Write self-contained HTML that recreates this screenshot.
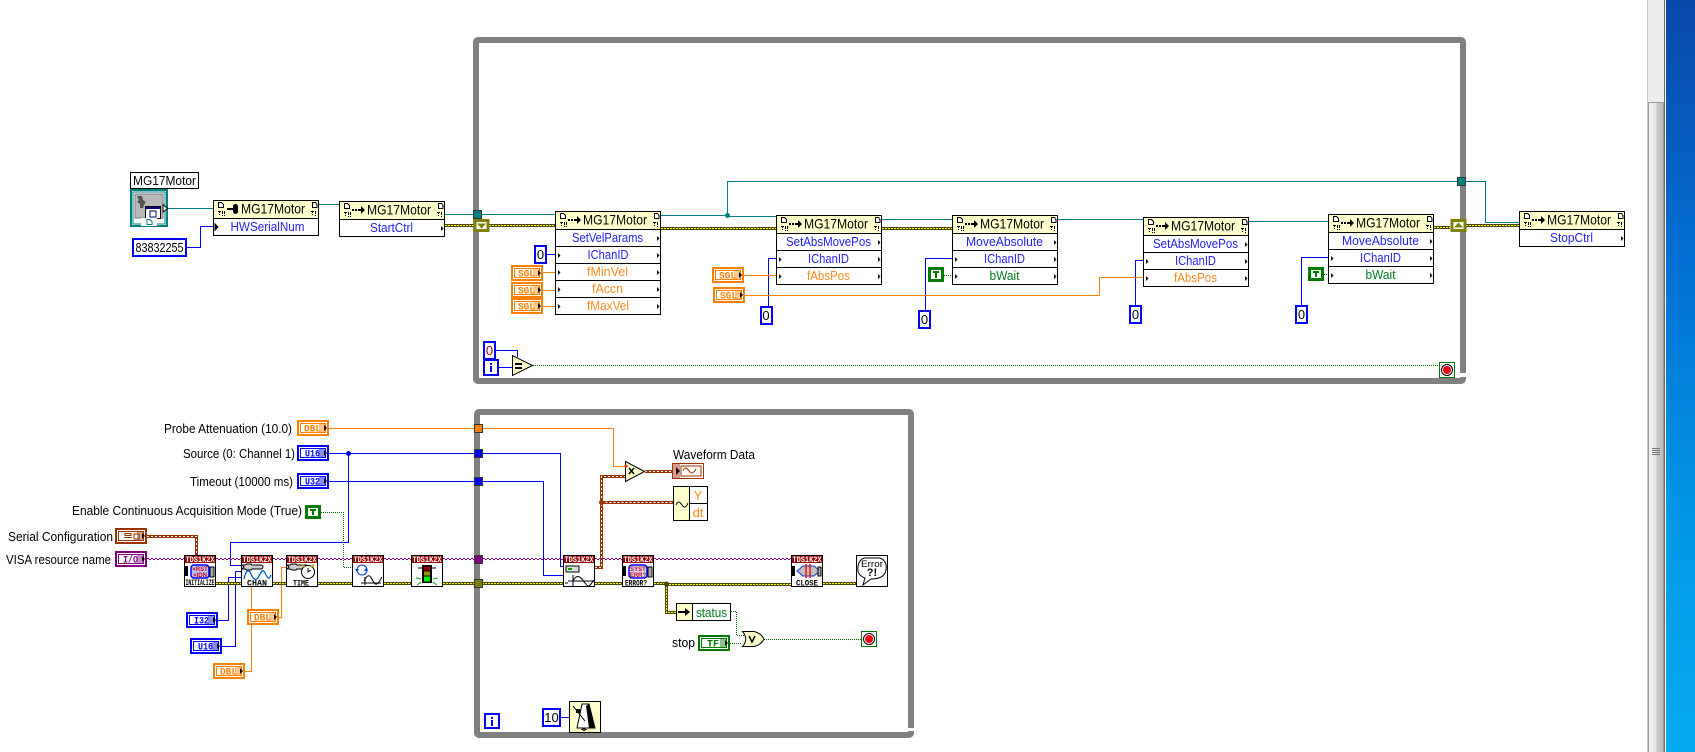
<!DOCTYPE html>
<html><head><meta charset="utf-8"><title>Block Diagram</title>
<style>
html,body{margin:0;padding:0;background:#fff;width:1695px;height:752px;overflow:hidden}
svg{position:absolute;left:0;top:0;font-family:"Liberation Sans",sans-serif}
.w{fill:none;shape-rendering:crispEdges}
.t{stroke:#008080}.bl{stroke:#0000ff}.or{stroke:#ff8000}
.gd{stroke:#006400;stroke-dasharray:1 1}
.f{fill:none;stroke:#808080;stroke-width:6}
.l{font-size:13px;fill:#000}
.m{font-size:14px;fill:#000}
.r{font-size:13px;text-anchor:middle}
.b{fill:#2222ff}.o{fill:#ff8a1e}.g{fill:#007a20}
.k{font:bold 10px "Liberation Mono",monospace}
.n{font-size:13px;fill:#000;text-anchor:middle}
.td{font:bold 8px "Liberation Mono",monospace;fill:#fff}
.ts{font:bold 8px "Liberation Mono",monospace;fill:#000}
</style></head><body>
<svg width="1695" height="752" viewBox="0 0 1695 752" xmlns="http://www.w3.org/2000/svg">
<defs>
<linearGradient id="bg" x1="0" y1="0" x2="0" y2="1"><stop offset="0" stop-color="#0a48a8"/><stop offset=".35" stop-color="#0270d4"/><stop offset=".7" stop-color="#0298e6"/><stop offset="1" stop-color="#06aaf0"/></linearGradient>
<linearGradient id="th" x1="0" y1="0" x2="1" y2="0"><stop offset="0" stop-color="#f4f4f4"/><stop offset=".45" stop-color="#e6e6e6"/><stop offset=".6" stop-color="#c8c8cc"/><stop offset="1" stop-color="#bcbcc0"/></linearGradient>
<g id="hd">
<rect x=".5" y=".5" width="104" height="18" fill="#ffffcc"/>
<path d="M5.500 2.500H8.500L10.500 4.500V7.500H5.500Z" fill="#fff" stroke="#000" stroke-width="1" shape-rendering="crispEdges"/>
<path d="M99.500 2.500H102.500L104 4.500V7.500H99.500Z" fill="#fff" stroke="#000" stroke-width="1" shape-rendering="crispEdges"/>
<path d="M5 11h3v1h-1v1h-1v-1h-1zM6 14h1v1h-1zM9 11h1v3h-1zM9 15h1v1h-1zM11 11h1v3h-1zM11 15h1v1h-1z" fill="#000"/>
<path d="M98 11h3v1h-1v1h-1v-1h-1zM99 14h1v1h-1zM102 11h1v3h-1zM102 15h1v1h-1z" fill="#000"/>
</g>
<g id="ar"><path d="M13 8h2v2h-2zM16 8h2v2h-2zM19 8h3V5l4 4-4 4v-3h-3z" fill="#000"/></g>
<g id="ky"><path d="M14 8h6V6.500a2.500 2.500 0 0 1 5 0V11.500a2.500 2.500 0 0 1-5 0V10H14z" fill="#000"/></g>
<g id="tl"><path d="M3 -2V3L5.500 .5Z" fill="#000"/></g>
<g id="tr"><path d="M102 -2V3L104.500 .5Z" fill="#000"/></g>
<g id="c">
<rect x="1" y="1" width="30" height="14" fill="#fff" stroke="currentColor" stroke-width="2"/>
<rect x="3.500" y="3.500" width="25" height="9" fill="#fff" stroke="currentColor" stroke-width="1"/>
<rect x="22" y="3" width="7" height="10" fill="currentColor" opacity=".45"/>
<path d="M27 5V11L30 8Z" fill="#000"/>
</g>
<g id="tds">
<rect x=".5" y=".5" width="31" height="31" fill="#fff" stroke="#000"/>
<rect x="1" y="1" width="30" height="7" fill="#990000"/>
<text x="16" y="7" class="td" text-anchor="middle" textLength="29" lengthAdjust="spacingAndGlyphs">TDS1K2X</text>
</g>
<g id="wr"><path d="M1 10h3l2-1h4l1 1h9a1.500 1.500 0 0 1 0 4h-9l-1 1h-4l-2-1h-3l2-2z" fill="#ccc" stroke="#000" stroke-width="1"/></g>
<g id="stp"><rect x=".5" y=".5" width="15" height="15" fill="#fff" stroke="#007a00"/><circle cx="8" cy="8" r="5.500" fill="#fff" stroke="#000"/><circle cx="8" cy="8" r="4" fill="#f00010"/></g>
</defs>

<rect x="1647" y="0" width="1" height="752" fill="#c8c8c8"/>
<rect x="1648" y="0" width="16" height="102" fill="#ededed"/>
<rect x="1648.500" y="102.500" width="15" height="660" fill="url(#th)" stroke="#999"/>
<path d="M1652 448.500h8M1652 450.500h8M1652 452.500h8M1652 454.500h8" stroke="#777" shape-rendering="crispEdges"/>
<rect x="1664" y="0" width="1" height="752" fill="#6a6a6a"/>
<rect x="1666" y="0" width="29" height="752" fill="url(#bg)"/>

<!-- loop frames -->
<rect x="476" y="40" width="987" height="341" rx="2" class="f"/>
<rect x="1459" y="373" width="8" height="4" fill="#fff"/>
<rect x="477" y="412" width="434" height="323" rx="2" class="f"/>
<rect x="907" y="728" width="8" height="3" fill="#fff"/>

<!-- wires -->
<path class="w t" d="M168 208.500H213.500M319 204.500H339.500M445 214.500H555.500M661 215.500H727.500V181.500H1458M727 216.500H776.500M882 219.500H952.500M1058 219.500H1143.500M1249 221.500H1328.500M1466 181.500H1485.500V222.500H1519.500"/>
<circle cx="727.500" cy="215.500" r="2.500" fill="#008080"/>
<path class="w bl" d="M187 247.500H200.500V226.500H213.500M547 254.500H555.500M768.500 306V258.500H776.500M925.500 310V258.500H952.500M1135.500 305V260.500H1143.500M1301.500 305V257.500H1328.500M496 350.500H517.500V357M499 367.500H512"/>
<path class="w or" d="M543 272.500H555.500M543 290.500H555.500M543 306.500H555.500M744 275.500H776.500M745 295.500H1099.500V277.500H1143.500"/>
<path class="w gd" d="M944 275.500H952M1324 274.500H1328M533 365.500H1439"/>

<path class="w or" d="M329 428.500H613.500V466.500H625"/>
<path class="w bl" d="M329 453.500H560.500V566.500H563M329 481.500H543.500V575.500H563M348.500 453V542.500H230.500V565.500H241"/>
<circle cx="348.500" cy="453.500" r="2.500" fill="#0000ff"/>
<path class="w gd" d="M321 512.500H343.500V567.500H352"/>
<path class="w bl" d="M218 620.500H228.500V577.500H241M222 646.500H235.500V571.500H241"/>
<path class="w or" d="M279 617.500H281.500V567.500H286M245 671.500H251.500V587"/>
<path class="w gd" d="M731 611.500H736.500V635.500H745M730 643.500H742M764 639.500H861"/>
<path class="w bl" d="M561 717.500H569"/>

<!-- purple -->
<path class="w" stroke="#800080" stroke-dasharray="2 2" d="M147 558.500H184M216 558.500H241M273 558.500H286M318 558.500H352M384 558.500H411M443 558.500H563M595 558.500H622M654 558.500H791"/>
<path class="w" stroke="#800080" stroke-dasharray="2 2" stroke-dashoffset="2" d="M147 559.500H184M216 559.500H241M273 559.500H286M318 559.500H352M384 559.500H411M443 559.500H563M595 559.500H622M654 559.500H791"/>

<!-- error wires -->
<path class="w" stroke="#4a4a00" stroke-width="3" d="M445 225.500H474M489 225.500H555M661 228.500H776M882 228.500H952M1434 227.500H1450M1466 225.500H1519M216 583.500H241M273 583.500H286M318 583.500H352M384 583.500H411M443 583.500H563M595 583.500H622M654 583.500H666M666 584.500H791M823 583.500H856M666.500 584V612.500H676"/>
<path class="w" stroke="#ffff00" stroke-dasharray="2 1" d="M445 225.500H474M489 225.500H555M661 228.500H776M882 228.500H952M1434 227.500H1450M1466 225.500H1519M216 583.500H241M273 583.500H286M318 583.500H352M384 583.500H411M443 583.500H563M595 583.500H622M654 583.500H666M666 584.500H791M823 583.500H856M666.500 584V612.500H676"/>

<!-- brown wires -->
<path class="w" stroke="#993300" stroke-width="3" d="M147 536.500H196.500V555M595 567.500H601.500V476.500H625M601.500 502.500H673M645 471.500H672"/>
<path class="w" stroke="#fff" stroke-dasharray="2 2" d="M147 536.500H196.500V555M595 567.500H601.500V476.500H625M601.500 502.500H673M645 471.500H672"/>
<circle cx="601.500" cy="502.500" r="2.500" fill="#993300"/>
<circle cx="666.500" cy="584" r="2.500" fill="#4a4a00"/>

<!-- tunnels -->
<g shape-rendering="crispEdges" stroke="#333">
<rect x="473.500" y="210.500" width="8" height="8" fill="#008080"/>
<rect x="1457.500" y="177.500" width="8" height="8" fill="#008080"/>
<rect x="474.500" y="424.500" width="8" height="8" fill="#ff8000"/>
<rect x="474.500" y="449.500" width="8" height="8" fill="#0000ff"/>
<rect x="474.500" y="477.500" width="8" height="8" fill="#0000ff"/>
<rect x="474.500" y="555.500" width="8" height="8" fill="#800080"/>
<rect x="474.500" y="579.500" width="8" height="8" fill="#808000"/>
</g>
<!-- shift registers -->
<rect x="475" y="220.500" width="13" height="10" fill="#fff" stroke="#808000" stroke-width="3"/>
<path d="M477 223.500H486L481.500 228.500Z" fill="#808000"/>
<rect x="1452" y="220.500" width="13" height="10" fill="#fff" stroke="#808000" stroke-width="3"/>
<path d="M1454 227.500H1463L1458.500 222.500Z" fill="#808000"/>

<!-- class control -->
<rect x="130.500" y="172.500" width="68" height="16" fill="#fff" stroke="#000"/>
<text x="133" y="185" class="l" textLength="63" lengthAdjust="spacingAndGlyphs">MG17Motor</text>
<rect x="131" y="190" width="36" height="36" fill="#fff" stroke="#008080" stroke-width="2"/>
<rect x="133" y="192" width="32" height="32" fill="#fff" stroke="#008080" stroke-width="1"/>
<rect x="135" y="194" width="28" height="24" fill="#b8b8b8" stroke="#808080"/>
<path d="M137 196h5l1 4 3 2-2 3-1 3h-3v-4l-3-2 2-2z" fill="#555"/>
<rect x="145.500" y="206.500" width="15" height="12" fill="#fff" stroke="#000"/>
<rect x="146" y="207" width="14" height="2" fill="#000080"/>
<rect x="150" y="211" width="6" height="6" fill="#fff" stroke="#000080"/>
<rect x="141" y="218" width="16" height="8" fill="#fff"/>
<path d="M147 219.500h3l2 2v3h-5z" fill="#fff" stroke="#008080"/>
<path d="M163 204.500V212L167.500 208.500Z" fill="#fff" stroke="#000"/>

<!-- nodes -->
<g transform="translate(213,200)"><use href="#hd"/><use href="#ky"/><rect x=".5" y=".5" width="105" height="35" fill="none" stroke="#000" shape-rendering="crispEdges"/><path d="M0 18.500H105" stroke="#000" shape-rendering="crispEdges"/>
<text x="28" y="13.500" class="m" textLength="64" lengthAdjust="spacingAndGlyphs">MG17Motor</text>
<text x="54.500" y="31" class="r b" textLength="74" lengthAdjust="spacingAndGlyphs">HWSerialNum</text>
<path d="M1.500 22.500V31.500L5.500 27Z" fill="#000"/></g>

<g transform="translate(339,201)"><use href="#hd"/><use href="#ar"/><rect x=".5" y=".5" width="105" height="35" fill="none" stroke="#000" shape-rendering="crispEdges"/><path d="M0 18.500H105" stroke="#000" shape-rendering="crispEdges"/>
<text x="28" y="13.500" class="m" textLength="64" lengthAdjust="spacingAndGlyphs">MG17Motor</text>
<text x="52.500" y="31" class="r b" textLength="43" lengthAdjust="spacingAndGlyphs">StartCtrl</text>
<use href="#tr" y="27"/></g>

<g transform="translate(555,211)"><rect x=".5" y=".5" width="105" height="103" fill="#fff"/><use href="#hd"/><use href="#ar"/><rect x=".5" y=".5" width="105" height="103" fill="none" stroke="#000" shape-rendering="crispEdges"/><path d="M0 18.500H105M0 35.500H105M0 52.500H105M0 69.500H105M0 86.500H105" stroke="#000" shape-rendering="crispEdges"/>
<text x="28" y="13.500" class="m" textLength="64" lengthAdjust="spacingAndGlyphs">MG17Motor</text>
<text x="52.500" y="31" class="r b" textLength="71" lengthAdjust="spacingAndGlyphs">SetVelParams</text>
<text x="53" y="48" class="r b" textLength="41" lengthAdjust="spacingAndGlyphs">IChanID</text>
<text x="52.500" y="65" class="r o" textLength="41" lengthAdjust="spacingAndGlyphs">fMinVel</text>
<text x="52.500" y="82" class="r o" textLength="31" lengthAdjust="spacingAndGlyphs">fAccn</text>
<text x="53" y="99" class="r o" textLength="42" lengthAdjust="spacingAndGlyphs">fMaxVel</text>
<use href="#tr" y="27"/><use href="#tl" y="44"/><use href="#tr" y="44"/><use href="#tl" y="61"/><use href="#tr" y="61"/><use href="#tl" y="78"/><use href="#tr" y="78"/><use href="#tl" y="95"/><use href="#tr" y="95"/></g>

<g transform="translate(776,215)"><rect x=".5" y=".5" width="105" height="69" fill="#fff"/><use href="#hd"/><use href="#ar"/><rect x=".5" y=".5" width="105" height="69" fill="none" stroke="#000" shape-rendering="crispEdges"/><path d="M0 18.500H105M0 35.500H105M0 52.500H105" stroke="#000" shape-rendering="crispEdges"/>
<text x="28" y="13.500" class="m" textLength="64" lengthAdjust="spacingAndGlyphs">MG17Motor</text>
<text x="52.500" y="31" class="r b" textLength="85" lengthAdjust="spacingAndGlyphs">SetAbsMovePos</text>
<text x="52.500" y="48" class="r b" textLength="41" lengthAdjust="spacingAndGlyphs">IChanID</text>
<text x="52.500" y="65" class="r o" textLength="43" lengthAdjust="spacingAndGlyphs">fAbsPos</text>
<use href="#tr" y="27"/><use href="#tl" y="44"/><use href="#tr" y="44"/><use href="#tl" y="61"/><use href="#tr" y="61"/></g>

<g transform="translate(952,215)"><rect x=".5" y=".5" width="105" height="69" fill="#fff"/><use href="#hd"/><use href="#ar"/><rect x=".5" y=".5" width="105" height="69" fill="none" stroke="#000" shape-rendering="crispEdges"/><path d="M0 18.500H105M0 35.500H105M0 52.500H105" stroke="#000" shape-rendering="crispEdges"/>
<text x="28" y="13.500" class="m" textLength="64" lengthAdjust="spacingAndGlyphs">MG17Motor</text>
<text x="52.500" y="31" class="r b" textLength="77" lengthAdjust="spacingAndGlyphs">MoveAbsolute</text>
<text x="52.500" y="48" class="r b" textLength="41" lengthAdjust="spacingAndGlyphs">IChanID</text>
<text x="52.500" y="65" class="r g" textLength="30" lengthAdjust="spacingAndGlyphs">bWait</text>
<use href="#tr" y="27"/><use href="#tl" y="44"/><use href="#tr" y="44"/><use href="#tl" y="61"/><use href="#tr" y="61"/></g>

<g transform="translate(1143,217)"><rect x=".5" y=".5" width="105" height="69" fill="#fff"/><use href="#hd"/><use href="#ar"/><rect x=".5" y=".5" width="105" height="69" fill="none" stroke="#000" shape-rendering="crispEdges"/><path d="M0 18.500H105M0 35.500H105M0 52.500H105" stroke="#000" shape-rendering="crispEdges"/>
<text x="28" y="13.500" class="m" textLength="64" lengthAdjust="spacingAndGlyphs">MG17Motor</text>
<text x="52.500" y="31" class="r b" textLength="85" lengthAdjust="spacingAndGlyphs">SetAbsMovePos</text>
<text x="52.500" y="48" class="r b" textLength="41" lengthAdjust="spacingAndGlyphs">IChanID</text>
<text x="52.500" y="65" class="r o" textLength="43" lengthAdjust="spacingAndGlyphs">fAbsPos</text>
<use href="#tr" y="27"/><use href="#tl" y="44"/><use href="#tr" y="44"/><use href="#tl" y="61"/><use href="#tr" y="61"/></g>

<g transform="translate(1328,214)"><rect x=".5" y=".5" width="105" height="69" fill="#fff"/><use href="#hd"/><use href="#ar"/><rect x=".5" y=".5" width="105" height="69" fill="none" stroke="#000" shape-rendering="crispEdges"/><path d="M0 18.500H105M0 35.500H105M0 52.500H105" stroke="#000" shape-rendering="crispEdges"/>
<text x="28" y="13.500" class="m" textLength="64" lengthAdjust="spacingAndGlyphs">MG17Motor</text>
<text x="52.500" y="31" class="r b" textLength="77" lengthAdjust="spacingAndGlyphs">MoveAbsolute</text>
<text x="52.500" y="48" class="r b" textLength="41" lengthAdjust="spacingAndGlyphs">IChanID</text>
<text x="52.500" y="65" class="r g" textLength="30" lengthAdjust="spacingAndGlyphs">bWait</text>
<use href="#tr" y="27"/><use href="#tl" y="44"/><use href="#tr" y="44"/><use href="#tl" y="61"/><use href="#tr" y="61"/></g>

<g transform="translate(1519,211)"><rect x=".5" y=".5" width="105" height="35" fill="#fff"/><use href="#hd"/><use href="#ar"/><rect x=".5" y=".5" width="105" height="35" fill="none" stroke="#000" shape-rendering="crispEdges"/><path d="M0 18.500H105" stroke="#000" shape-rendering="crispEdges"/>
<text x="28" y="13.500" class="m" textLength="64" lengthAdjust="spacingAndGlyphs">MG17Motor</text>
<text x="52.500" y="31" class="r b" textLength="43" lengthAdjust="spacingAndGlyphs">StopCtrl</text>
<use href="#tr" y="27"/></g>

<!-- numeric constants -->
<g fill="#fff" stroke="#0000ff" stroke-width="2" shape-rendering="crispEdges">
<rect x="133" y="239" width="53" height="17"/>
<rect x="535" y="246" width="11" height="17"/>
<rect x="761" y="307" width="11" height="17"/>
<rect x="919" y="311" width="11" height="17"/>
<rect x="1130" y="306" width="11" height="17"/>
<rect x="1296" y="306" width="11" height="17"/>
<rect x="484" y="342" width="11" height="17"/>
<rect x="543" y="709" width="17" height="17"/>
</g>
<text x="159.500" y="252" class="n" textLength="48" lengthAdjust="spacingAndGlyphs">83832255</text>
<text x="540.500" y="259" class="n">0</text>
<text x="766" y="320" class="n">0</text>
<text x="924.500" y="324" class="n">0</text>
<text x="1135.500" y="319" class="n">0</text>
<text x="1301.500" y="319" class="n">0</text>
<text x="489.500" y="355" class="n" style="fill:#900">0</text>
<text x="551.500" y="722" class="n">10</text>

<!-- typed controls -->
<g color="#ff8000" fill="#ff8000">
<g transform="translate(511,265)"><use href="#c"/><text x="7" y="11.500" class="k" textLength="17" lengthAdjust="spacingAndGlyphs">SGL</text></g>
<g transform="translate(511,282)"><use href="#c"/><text x="7" y="11.500" class="k" textLength="17" lengthAdjust="spacingAndGlyphs">SGL</text></g>
<g transform="translate(511,298)"><use href="#c"/><text x="7" y="11.500" class="k" textLength="17" lengthAdjust="spacingAndGlyphs">SGL</text></g>
<g transform="translate(712,267)"><use href="#c"/><text x="7" y="11.500" class="k" textLength="17" lengthAdjust="spacingAndGlyphs">SGL</text></g>
<g transform="translate(713,287)"><use href="#c"/><text x="7" y="11.500" class="k" textLength="17" lengthAdjust="spacingAndGlyphs">SGL</text></g>
<g transform="translate(297,420)"><use href="#c"/><text x="7" y="11.500" class="k" textLength="17" lengthAdjust="spacingAndGlyphs">DBL</text></g>
<g transform="translate(247,609)"><use href="#c"/><text x="7" y="11.500" class="k" textLength="17" lengthAdjust="spacingAndGlyphs">DBL</text></g>
<g transform="translate(213,663)"><use href="#c"/><text x="7" y="11.500" class="k" textLength="17" lengthAdjust="spacingAndGlyphs">DBL</text></g>
</g>
<g color="#0000ff" fill="#0000ff">
<g transform="translate(297,445)"><use href="#c"/><text x="8" y="11.500" class="k" textLength="15" lengthAdjust="spacingAndGlyphs">U16</text></g>
<g transform="translate(297,473)"><use href="#c"/><text x="8" y="11.500" class="k" textLength="15" lengthAdjust="spacingAndGlyphs">U32</text></g>
<g transform="translate(186,612)"><use href="#c"/><text x="8" y="11.500" class="k" textLength="15" lengthAdjust="spacingAndGlyphs">I32</text></g>
<g transform="translate(190,638)"><use href="#c"/><text x="8" y="11.500" class="k" textLength="15" lengthAdjust="spacingAndGlyphs">U16</text></g>
</g>
<g color="#993300"><g transform="translate(115,528)"><use href="#c"/><path d="M10 5.500h6v2h-6zM9 9.500h8M19 6h5v5h-5z" fill="none" stroke="#993300"/></g></g>
<g color="#800080" fill="#800080"><g transform="translate(115,551)"><use href="#c"/><text x="8" y="11.500" class="k" textLength="15" lengthAdjust="spacingAndGlyphs">I/O</text></g></g>
<g color="#007a00" fill="#007a00"><g transform="translate(698,635)"><use href="#c"/><text x="9" y="11.500" class="k" textLength="12" lengthAdjust="spacingAndGlyphs">TF</text></g></g>

<!-- T constants -->
<g shape-rendering="crispEdges">
<rect x="928" y="267" width="16" height="15" fill="#007a00"/><rect x="931" y="270" width="10" height="9" fill="#fff"/><path d="M933 271h6v2h-2v5h-2v-5h-2z" fill="#007a00"/>
<rect x="1308" y="267" width="16" height="14" fill="#007a00"/><rect x="1311" y="270" width="10" height="8" fill="#fff"/><path d="M1313 271h6v2h-2v4h-2v-4h-2z" fill="#007a00"/>
<rect x="305" y="505" width="16" height="14" fill="#007a00"/><rect x="308" y="508" width="10" height="8" fill="#fff"/><path d="M310 509h6v2h-2v4h-2v-4h-2z" fill="#007a00"/>
</g>

<!-- stop, i -->
<use href="#stp" x="1439" y="362"/>
<use href="#stp" x="861" y="631"/>
<g shape-rendering="crispEdges">
<rect x="484" y="360" width="14" height="15" fill="#fff" stroke="#0000ff" stroke-width="2"/>
<path d="M490 363h2v2h-2zM490 366h2v6h-2z" fill="#0000ff"/>
<rect x="485" y="714" width="14" height="14" fill="#fff" stroke="#0000ff" stroke-width="2"/>
<path d="M491 717h2v2h-2zM491 720h2v6h-2z" fill="#0000ff"/>
</g>
<path d="M512.500 355.500V375.500L532.500 365.500Z" fill="#ffffcc" stroke="#000"/>
<path d="M515 363h7v2h-7zM515 367h7v2h-7z" fill="#000"/>

<!-- labels -->
<text x="164" y="433" class="l" textLength="128" lengthAdjust="spacingAndGlyphs">Probe Attenuation (10.0)</text>
<text x="183" y="458" class="l" textLength="112" lengthAdjust="spacingAndGlyphs">Source (0: Channel 1)</text>
<text x="190" y="486" class="l" textLength="103" lengthAdjust="spacingAndGlyphs">Timeout (10000 ms)</text>
<text x="72" y="515" class="l" textLength="230" lengthAdjust="spacingAndGlyphs">Enable Continuous Acquisition Mode (True)</text>
<text x="8" y="541" class="l" textLength="105" lengthAdjust="spacingAndGlyphs">Serial Configuration</text>
<text x="6" y="564" class="l" textLength="105" lengthAdjust="spacingAndGlyphs">VISA resource name</text>
<text x="673" y="459" class="l" textLength="82" lengthAdjust="spacingAndGlyphs">Waveform Data</text>
<text x="672" y="647" class="l" textLength="23" lengthAdjust="spacingAndGlyphs">stop</text>

<!-- TDS icons -->
<g transform="translate(184,555)"><use href="#tds"/>
<rect x="1" y="11" width="3" height="10" fill="#000"/>
<rect x="7" y="10" width="18" height="13" rx="3" fill="#b0c8ff" stroke="#0000ff" stroke-width="1.500"/>
<text x="16" y="16" font-size="6" font-weight="bold" fill="#e00000" text-anchor="middle">×RST</text>
<text x="16" y="22" font-size="6" font-weight="bold" fill="#e00000" text-anchor="middle">×IDN</text>
<path d="M26 12h4v10h-4z" fill="#aaa" stroke="#000"/>
<text x="1.500" y="30" class="ts" textLength="29" lengthAdjust="spacingAndGlyphs">INITIALIZE</text></g>

<g transform="translate(241,555)"><use href="#tds"/><use href="#wr"/>
<path d="M3 24C5 14 8 14 10 19S15 27 18 21S22 14 24 18S28 26 30 20" fill="none" stroke="#0060d0" stroke-width="1.300"/>
<text x="16" y="30.500" class="ts" text-anchor="middle" textLength="20" lengthAdjust="spacingAndGlyphs">CHAN</text></g>

<g transform="translate(286,555)"><use href="#tds"/><use href="#wr"/>
<circle cx="22" cy="17" r="6.500" fill="#fff" stroke="#000"/><path d="M22 13v4l3 -2" fill="none" stroke="#000"/><path d="M16 10l3 2M28 10l-3 2" stroke="#b8a000" stroke-width="2"/>
<text x="15" y="30.500" class="ts" text-anchor="middle" textLength="16" lengthAdjust="spacingAndGlyphs">TIME</text></g>

<g transform="translate(352,555)"><use href="#tds"/>
<circle cx="10" cy="15" r="5" fill="none" stroke="#0040e0"/><path d="M14 13l2 3h-4zM5 17l2-3h-4z" fill="#0040e0"/>
<path d="M9 28h20M13 22v8" stroke="#000"/><path d="M12 26C16 18 18 20 21 26S26 29 30 22" fill="none" stroke="#000"/></g>

<g transform="translate(411,555)"><use href="#tds"/>
<rect x="11" y="10" width="10" height="18" fill="#000"/><rect x="13" y="11.500" width="6" height="4" fill="#8b0000"/><rect x="13" y="16.500" width="6" height="4" fill="#a09000"/><rect x="13" y="21.500" width="6" height="5" fill="#00f000"/>
<path d="M10 24l-5-1M10 27l-4 3M22 24l5-1M22 27l4 3" stroke="#00a020"/><path d="M7 13h4M21 13h4" stroke="#000"/></g>

<g transform="translate(563,555)"><use href="#tds"/>
<rect x="3" y="11" width="13" height="6" fill="#ddd" stroke="#000"/><rect x="5" y="13" width="4" height="2" fill="#00a000"/>
<path d="M2 28h3M10 20v11M5 26h26" stroke="#000"/><path d="M10 26C14 18 18 22 22 28S27 30 31 25" fill="none" stroke="#000"/></g>

<g transform="translate(622,555)"><use href="#tds"/>
<rect x="1" y="11" width="3" height="10" fill="#000"/>
<rect x="7" y="10" width="18" height="13" rx="3" fill="#c8d8ff" stroke="#0000ff" stroke-width="1.500"/>
<text x="16" y="16" font-size="6" font-weight="bold" fill="#e00000" text-anchor="middle">SYST</text>
<text x="16" y="22" font-size="6" font-weight="bold" fill="#e00000" text-anchor="middle">ERR?</text>
<path d="M26 12h4v10h-4z" fill="#aaa" stroke="#000"/>
<text x="3" y="30.500" class="ts" textLength="22" lengthAdjust="spacingAndGlyphs">ERROR?</text></g>

<g transform="translate(791,555)"><use href="#tds"/>
<rect x="1" y="11" width="3" height="10" fill="#000"/>
<path d="M6 16L12 11H23L29 16L23 21H12Z" fill="#c0c0c0" stroke="#0040e0"/><path d="M15 9v14M19 9v14" stroke="#ff0000" stroke-width="1.400"/>
<path d="M27 12h3v9h-3z" fill="#aaa" stroke="#000"/>
<text x="16" y="30.500" class="ts" text-anchor="middle" textLength="22" lengthAdjust="spacingAndGlyphs">CLOSE</text></g>

<g transform="translate(856,555)"><rect x=".5" y=".5" width="31" height="31" fill="#fff" stroke="#000"/>
<path d="M8 3H24C29 5 31 9 30 15C29 21 24 24 15 24L7 30L9 23C3 21 1 17 2 11C3 6 5 4 8 3Z" fill="#fff" stroke="#000"/>
<text x="16" y="12" font-size="9" text-anchor="middle" fill="#000" textLength="22" lengthAdjust="spacingAndGlyphs">Error</text>
<text x="16" y="21" font-size="11" font-weight="bold" text-anchor="middle" fill="#000">?!</text></g>

<!-- metronome -->
<g transform="translate(569,701)"><rect x=".5" y=".5" width="31" height="31" fill="#ffffcc" stroke="#000"/>
<path d="M13 3H20L26 27H8Z" fill="#fff" stroke="#000"/><path d="M20 3L26 27H20L17 5Z" fill="#000"/><path d="M4 5L16 20" stroke="#000"/><rect x="7" y="8" width="4" height="4" fill="#000"/><path d="M13 28.500l2-1 2 1-2 1z" fill="none" stroke="#000"/></g>

<!-- multiply & indicators -->
<path d="M625.500 461.500V481.500L644.500 471.500Z" fill="#ffffcc" stroke="#000"/>
<path d="M629 468l5 6M634 468l-5 6" stroke="#000" stroke-width="1.500"/>
<circle cx="626" cy="466" r="1.500" fill="#ff2000"/>

<rect x="672.500" y="463.500" width="31" height="15" fill="#fff" stroke="#993300" stroke-width="1"/>
<rect x="673" y="464" width="7" height="14" fill="#d89a90"/>
<path d="M676 467V475L680 471Z" fill="#000"/>
<rect x="681" y="466" width="20" height="10" fill="#fff" stroke="#993300"/>
<path d="M683 471C685 466 687 468 689 471S693 474 696 469" fill="none" stroke="#993300"/>

<rect x="673.500" y="486.500" width="34" height="34" fill="#fff" stroke="#000" shape-rendering="crispEdges"/>
<rect x="674" y="487" width="15" height="33" fill="#ffffcc"/>
<path d="M689.500 486V520M689 503.500H707" stroke="#000" shape-rendering="crispEdges"/>
<path d="M676 505C678 500 680 502 682 505S686 508 688 503" fill="none" stroke="#000"/>
<text x="698" y="500" class="r o">Y</text>
<text x="698" y="517" class="r o">dt</text>

<rect x="676.500" y="603.500" width="54" height="17" fill="#fff" stroke="#000" shape-rendering="crispEdges"/>
<rect x="677" y="604" width="15" height="16" fill="#ffffcc"/>
<path d="M692.500 603V620" stroke="#000" shape-rendering="crispEdges"/>
<path d="M678 611h7v-3l5 4-5 4v-3h-7z" fill="#000"/>
<text x="711.500" y="617" class="r g" textLength="31" lengthAdjust="spacingAndGlyphs">status</text>

<path d="M742.500 631.500H754Q761 633 764 639Q761 645 754 646.500H742.500Q749 639 742.500 631.500Z" fill="#ffffcc" stroke="#000"/>
<path d="M749 636L752 642L755 636" fill="none" stroke="#000" stroke-width="1.500"/>
</svg>
</body></html>
